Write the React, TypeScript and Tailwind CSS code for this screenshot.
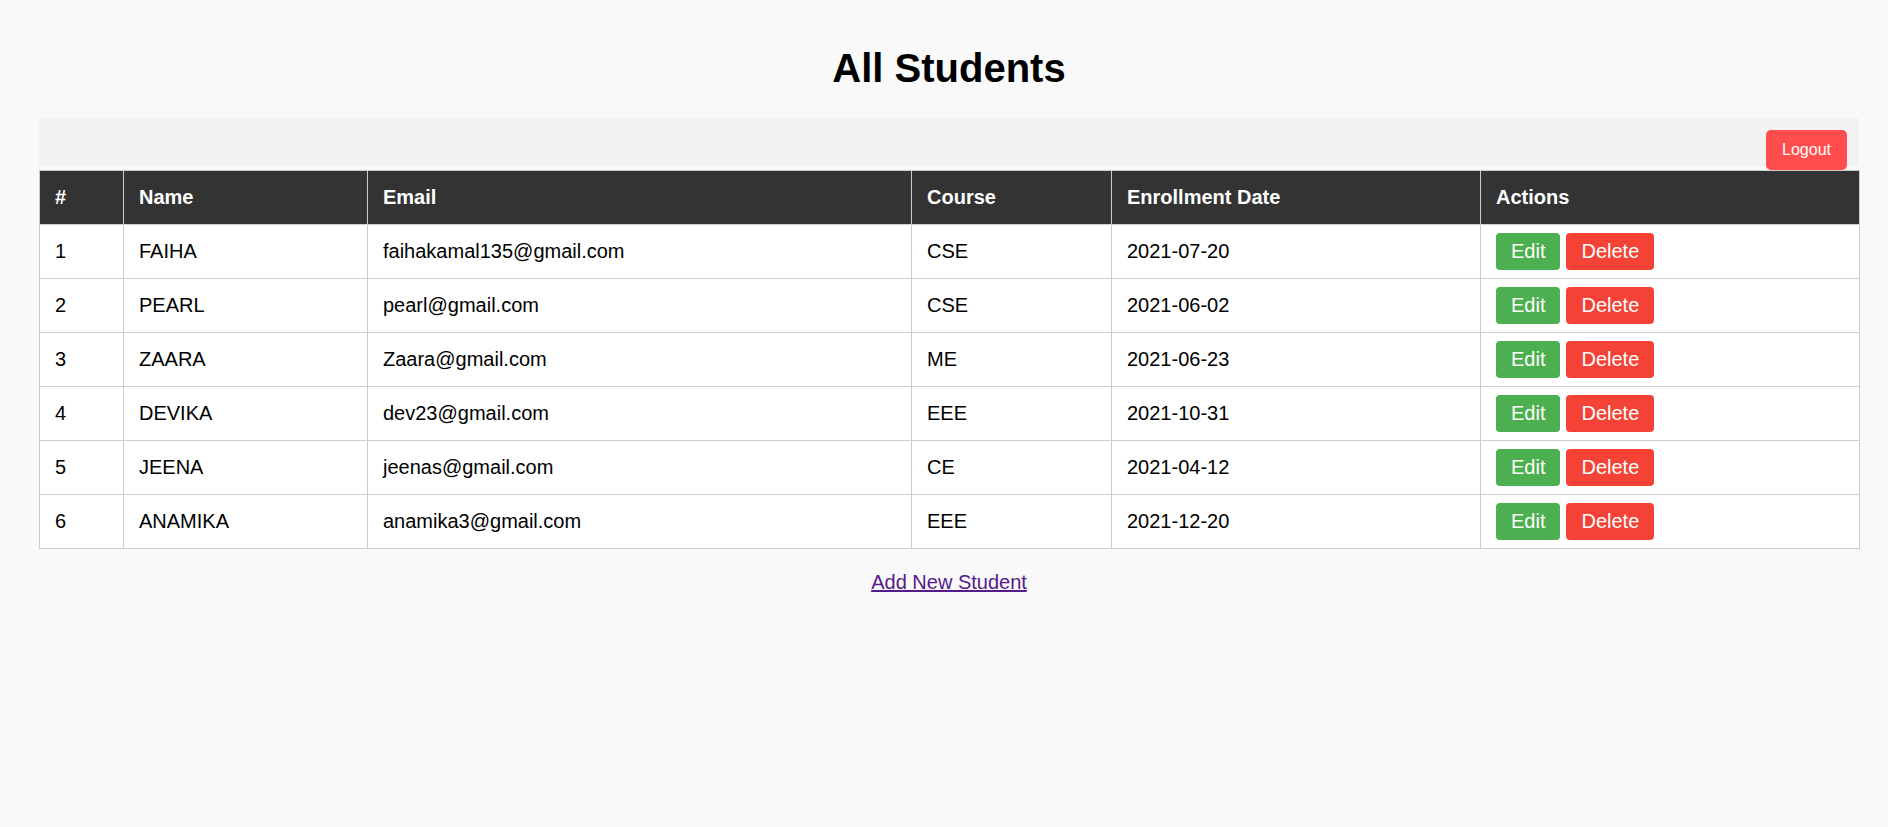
import React from "react";

const students = [
  { id: 1, name: "FAIHA", email: "faihakamal135@gmail.com", course: "CSE", date: "2021-07-20" },
  { id: 2, name: "PEARL", email: "pearl@gmail.com", course: "CSE", date: "2021-06-02" },
  { id: 3, name: "ZAARA", email: "Zaara@gmail.com", course: "ME", date: "2021-06-23" },
  { id: 4, name: "DEVIKA", email: "dev23@gmail.com", course: "EEE", date: "2021-10-31" },
  { id: 5, name: "JEENA", email: "jeenas@gmail.com", course: "CE", date: "2021-04-12" },
  { id: 6, name: "ANAMIKA", email: "anamika3@gmail.com", course: "EEE", date: "2021-12-20" },
];

export default function App() {
  return (
    <div className="min-h-[827px] w-full bg-[#f9f9f9] text-black [font-family:'Liberation_Sans',Arial,sans-serif]">
      <div className="ml-[39px] w-[1820px] pt-[45px]">
        <h1 className="text-center text-[40px] font-bold leading-[46px]">All Students</h1>
        <div className="mt-[27px] flex h-[48px] justify-end bg-[#f2f2f2] pr-[12px] pt-[12px]">
          <button className="h-[40px] w-[81px] rounded-[5px] bg-[#ff4d4d] text-[16px] leading-[18px] text-white">
            Logout
          </button>
        </div>
        <table className="mt-[4px] w-[1820px] table-fixed border-collapse text-[20px] leading-[23px]">
          <colgroup>
            <col className="w-[84px]" />
            <col className="w-[244px]" />
            <col className="w-[544px]" />
            <col className="w-[200px]" />
            <col className="w-[369px]" />
            <col className="w-[379px]" />
          </colgroup>
          <thead>
            <tr className="bg-[#333333] text-white">
              {["#", "Name", "Email", "Course", "Enrollment Date", "Actions"].map((h) => (
                <th key={h} className="h-[54px] border border-[#cccccc] px-[15px] text-left font-bold">
                  {h}
                </th>
              ))}
            </tr>
          </thead>
          <tbody>
            {students.map((s) => (
              <tr key={s.id} className="bg-white">
                <td className="h-[54px] border border-[#cccccc] px-[15px]">{s.id}</td>
                <td className="border border-[#cccccc] px-[15px]">{s.name}</td>
                <td className="border border-[#cccccc] px-[15px]">{s.email}</td>
                <td className="border border-[#cccccc] px-[15px]">{s.course}</td>
                <td className="border border-[#cccccc] px-[15px]">{s.date}</td>
                <td className="border border-[#cccccc] px-[15px]">
                  <div className="flex items-center gap-[6px]">
                    <button className="h-[37px] rounded-[4px] bg-[#4caf50] px-[15px] text-[20px] leading-[23px] text-white">
                      Edit
                    </button>
                    <button className="h-[37px] rounded-[4px] bg-[#f44336] px-[15px] text-[20px] leading-[23px] text-white">
                      Delete
                    </button>
                  </div>
                </td>
              </tr>
            ))}
          </tbody>
        </table>
        <div className="mt-[22px] text-center text-[20px] leading-[23px]">
          <a href="#" className="text-[#551a8b] underline">
            Add New Student
          </a>
        </div>
      </div>
    </div>
  );
}
